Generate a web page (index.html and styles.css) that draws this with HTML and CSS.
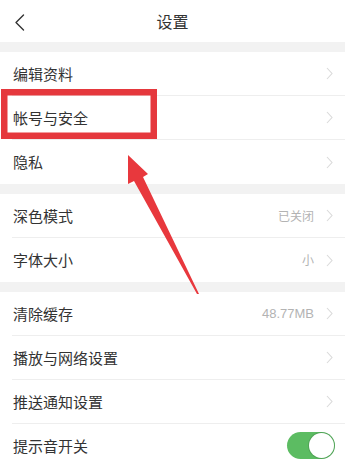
FILE: index.html
```html
<!DOCTYPE html>
<html lang="zh-CN">
<head>
<meta charset="utf-8">
<title>设置</title>
<link rel="stylesheet" href="styles.css">
</head>
<body>
<div class="page">
  <header class="nav">
    <span class="back">
      <svg width="11" height="17" viewBox="0 0 11 17"><path d="M9.5 1 L2 8.5 L9.5 16" fill="none" stroke="#333" stroke-width="1.4" stroke-linecap="round" stroke-linejoin="round"/></svg>
    </span>
    <h1 class="title">设置</h1>
    <span class="nav-spacer"></span>
  </header>

  <section class="group">
    <div class="row"><span class="label">编辑资料</span><span class="chev"><svg width="7" height="13" viewBox="0 0 7 13"><path d="M1 1 L6 6.5 L1 12" fill="none" stroke="#dadada" stroke-width="1.1"/></svg></span></div>
    <div class="row"><span class="label">帐号与安全</span><span class="chev"><svg width="7" height="13" viewBox="0 0 7 13"><path d="M1 1 L6 6.5 L1 12" fill="none" stroke="#dadada" stroke-width="1.1"/></svg></span></div>
    <div class="row"><span class="label">隐私</span><span class="chev"><svg width="7" height="13" viewBox="0 0 7 13"><path d="M1 1 L6 6.5 L1 12" fill="none" stroke="#dadada" stroke-width="1.1"/></svg></span></div>
  </section>

  <section class="group">
    <div class="row"><span class="label">深色模式</span><span class="value">已关闭</span><span class="chev"><svg width="7" height="13" viewBox="0 0 7 13"><path d="M1 1 L6 6.5 L1 12" fill="none" stroke="#dadada" stroke-width="1.1"/></svg></span></div>
    <div class="row"><span class="label">字体大小</span><span class="value">小</span><span class="chev"><svg width="7" height="13" viewBox="0 0 7 13"><path d="M1 1 L6 6.5 L1 12" fill="none" stroke="#dadada" stroke-width="1.1"/></svg></span></div>
  </section>

  <section class="group">
    <div class="row"><span class="label">清除缓存</span><span class="value value-num">48.77MB</span><span class="chev"><svg width="7" height="13" viewBox="0 0 7 13"><path d="M1 1 L6 6.5 L1 12" fill="none" stroke="#dadada" stroke-width="1.1"/></svg></span></div>
    <div class="row"><span class="label">播放与网络设置</span><span class="chev"><svg width="7" height="13" viewBox="0 0 7 13"><path d="M1 1 L6 6.5 L1 12" fill="none" stroke="#dadada" stroke-width="1.1"/></svg></span></div>
    <div class="row"><span class="label">推送通知设置</span><span class="chev"><svg width="7" height="13" viewBox="0 0 7 13"><path d="M1 1 L6 6.5 L1 12" fill="none" stroke="#dadada" stroke-width="1.1"/></svg></span></div>
    <div class="row row-toggle"><span class="label">提示音开关</span><span class="toggle"><span class="knob"></span></span></div>
  </section>

  <svg class="annot" width="345" height="461" viewBox="0 0 345 461">
    <rect x="4.25" y="92.25" width="149.5" height="43.5" fill="none" stroke="#e5383d" stroke-width="6.5"/>
    <polygon points="128,155 148,174 143,177 199,294 197,294 134,181 128,184" fill="#e8383d"/>
  </svg>
</div>
</body>
</html>
```

FILE: styles.css
```css
html, body {
  margin: 0;
  padding: 0;
  height: 461px;
  overflow: hidden;
}
body {
  background: #f2f2f2;
  font-family: "Noto Sans CJK SC", "Noto Sans", sans-serif;
  color: #333;
}
.page {
  position: relative;
  width: 345px;
  height: 461px;
  overflow: hidden;
}
.nav {
  height: 42px;
  background: #fff;
  display: grid;
  grid-template-columns: 44px 1fr 44px;
  align-items: center;
}
.back {
  display: flex;
  align-items: center;
  padding-left: 14px;
  padding-top: 3px;
}
.back svg { display: block; }
.title {
  margin: 0;
  text-align: center;
  font-size: 16px;
  font-weight: normal;
  color: #333;
  line-height: 20px;
}
.group {
  background: #fff;
  margin-top: 10px;
}
.row {
  height: 44px;
  box-sizing: border-box;
  margin-left: 12px;
  padding: 0 12px 0 1px;
  border-bottom: 1px solid #eeeeee;
  display: flex;
  align-items: center;
}
.row:last-child {
  border-bottom: none;
}
.label {
  flex: 1;
  font-size: 15px;
  line-height: 20px;
  color: #333;
}
.value {
  font-size: 12px;
  color: #b3b3b3;
  margin-right: 12px;
  line-height: 16px;
}
.value-num {
  font-family: "Liberation Sans", Arial, sans-serif;
  font-size: 13px;
}
.chev {
  display: flex;
  align-items: center;
}
.chev svg { display: block; }
.row-toggle {
  padding-right: 10px;
}
.toggle {
  width: 48px;
  height: 27px;
  border-radius: 14px;
  background: #5cbc62;
  display: flex;
  align-items: center;
  justify-content: flex-end;
  padding: 0 1px;
  box-sizing: border-box;
  margin-top: -2px;
}
.knob {
  width: 25px;
  height: 25px;
  border-radius: 50%;
  background: #fff;
  box-shadow: 0 0 0 1px rgba(60, 120, 70, 0.35);
}
.annot {
  position: absolute;
  top: 0;
  left: 0;
  pointer-events: none;
}
```
